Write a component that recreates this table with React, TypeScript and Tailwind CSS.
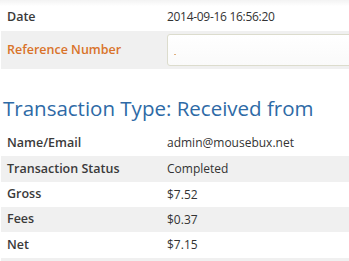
import React from "react"

const rows = [
  { label: "Name/Email", value: "admin@mousebux.net", h: "h-[26px]" },
  { label: "Transaction Status", value: "Completed", h: "h-[26px]" },
  { label: "Gross", value: "$7.52", h: "h-[25px]" },
  { label: "Fees", value: "$0.37", h: "h-[25px]" },
  { label: "Net", value: "$7.15", h: "h-[26px]" },
  { label: "", value: "", h: "h-[26px]" },
]

export default function App() {
  return (
    <div className="w-[349px] h-[261px] overflow-hidden bg-white text-[#333] font-['Open_Sans',sans-serif]">
      {/* Details */}
      <div className="flex items-center h-[31px] bg-gradient-to-b from-[#f3f3f3] to-white to-[20%]">
        <div className="w-[167px] pl-[7px] pt-[3px] text-[12.5px] font-semibold text-[#3a3a3a]">Date</div>
        <div className="pt-[3px] text-[12px] tracking-[-0.3px]">2014-09-16 16:56:20</div>
      </div>
      <div className="flex items-center h-[38px] ml-px bg-[#f0f0f0]">
        <div className="w-[166px] pl-[6px] text-[12.5px] font-semibold text-[#d9732a]">Reference Number</div>
        <div className="flex-1 h-[32px] -mr-2 rounded-[3px] border border-[#dcdccd] bg-gradient-to-b from-white to-[#fafafa] flex items-center pl-[6px]">
          <span className="block w-[2px] h-[1px] mt-[8px] bg-[#e0b080]" />
        </div>
      </div>

      <h2 className="mt-[25px] pl-[3px] text-[20.5px] leading-[28px] font-medium text-[#2e6aa6]">Transaction Type: Received from</h2>

      {/* Transaction table */}
      <div className="mt-[8px]">
        {rows.map((r, i) => (
          <div key={i} className={`flex items-center ${r.h} ${i % 2 === 1 ? "ml-px bg-[#f0f0f0]" : ""}`}>
            <div className={`${i % 2 === 1 ? "w-[166px] pl-[6px]" : "w-[167px] pl-[7px]"} text-[12.5px] font-semibold text-[#3a3a3a]`}>{r.label}</div>
            <div className="text-[12px]">{r.value}</div>
          </div>
        ))}
      </div>
    </div>
  )
}
